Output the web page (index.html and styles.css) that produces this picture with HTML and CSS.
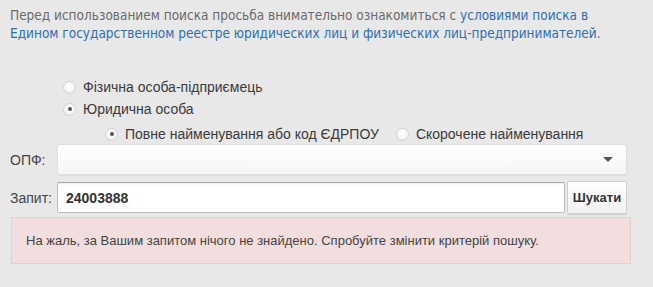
FILE: index.html
```html
<!DOCTYPE html>
<html lang="uk">
<head>
<meta charset="utf-8">
<link rel="stylesheet" href="styles.css">
</head>
<body>
<div class="page">
  <p class="intro">Перед использованием поиска просьба внимательно ознакомиться с <a href="#">условиями поиска в Едином государственном реестре юридических лиц и физических лиц-предпринимателей</a>.</p>
  <div class="radios">
    <label class="opt"><input type="radio" name="t"> Фізична особа-підприємець</label>
    <label class="opt"><input type="radio" name="t" checked> Юридична особа</label>
    <div class="sub">
      <label class="opt"><input type="radio" name="s" checked> Повне найменування або код ЄДРПОУ</label>
      <label class="opt"><input type="radio" name="s"> Скорочене найменування</label>
    </div>
  </div>
  <div class="row first">
    <span class="lbl">ОПФ:</span>
    <div class="select"><span class="arrow"></span></div>
  </div>
  <div class="row">
    <span class="lbl">Запит:</span>
    <input class="query" type="text" value="24003888">
    <button class="btn">Шукати</button>
  </div>
  <div class="alert">На жаль, за Вашим запитом нічого не знайдено. Спробуйте змінити критерій пошуку.</div>
</div>
</body>
</html>
```
FILE: styles.css
```css
html, body { margin: 0; padding: 0; background: #e8e8e8; }
.page { padding: 6px 26px 0 10px; font-family: "Liberation Sans", Arial, sans-serif; color: #333; }
.intro {
  margin: 0;
  font-family: "Liberation Sans Narrow", "DejaVu Sans Condensed", "Liberation Sans", sans-serif;
  font-size: 13.5px;
  line-height: 18px;
  color: #6a6a6a;
  width: 620px;
}
.intro a { color: #2d6fb0; text-decoration: none; }
.radios { padding: 34px 0 0 53px; font-size: 14px; color: #3a3a3a; }
.opt { display: flex; align-items: center; gap: 7px; height: 22px; }
.sub { display: flex; gap: 17px; padding-left: 42px; height: 22px; margin-top: 3px; }
.opt input {
  appearance: none; -webkit-appearance: none;
  margin: 0; width: 13px; height: 13px; border-radius: 50%;
  border: 1px solid #d4d4d4;
  background: radial-gradient(circle at 50% 40%, #fff 0%, #f6f6f6 55%, #e0e0e0 100%);
  box-sizing: border-box;
  display: grid; place-items: center;
}
.opt input:checked::after {
  content: ""; width: 4px; height: 4px; border-radius: 50%; background: #555;
}
.row { display: flex; align-items: center; margin-top: 6px; }
.row.first { margin-top: -1px; }
.lbl { width: 47px; font-size: 14px; color: #444; }
.select {
  flex: 1; height: 29px; position: relative;
  background: linear-gradient(#fff, #f6f6f6);
  border: 1px solid #dedede; border-radius: 3px;
  box-shadow: 0 1px 1px rgba(0,0,0,0.05);
}
.arrow {
  position: absolute; right: 13px; top: 12px;
  border-left: 5px solid transparent; border-right: 5px solid transparent; border-top: 5px solid #555;
}
.query {
  flex: 1; height: 31px; box-sizing: border-box; margin: 0;
  border: 1px solid #bdbdbd; border-top-color: #a9a9a9; border-radius: 2px;
  background: #fff; padding: 0 8px;
  font: bold 14px "Liberation Sans", Arial, sans-serif; color: #333;
  box-shadow: inset 0 1px 2px rgba(0,0,0,0.08);
}
.btn {
  margin-left: 2px; height: 33px; width: 60px; padding: 0;
  border: 1px solid #cfcfcf; border-radius: 2px;
  background: linear-gradient(#fff, #f2f2f2);
  font: bold 13px "Liberation Sans", Arial, sans-serif; color: #333;
  box-shadow: 0 1px 1px rgba(0,0,0,0.1);
}
.alert {
  margin: 3px -4px 0 1px; height: 47px; box-sizing: border-box;
  background: #f2dede; border: 1px solid #ebcccc;
  padding: 0 14px; display: flex; align-items: center;
  font-size: 13px; color: #444;
}
```
